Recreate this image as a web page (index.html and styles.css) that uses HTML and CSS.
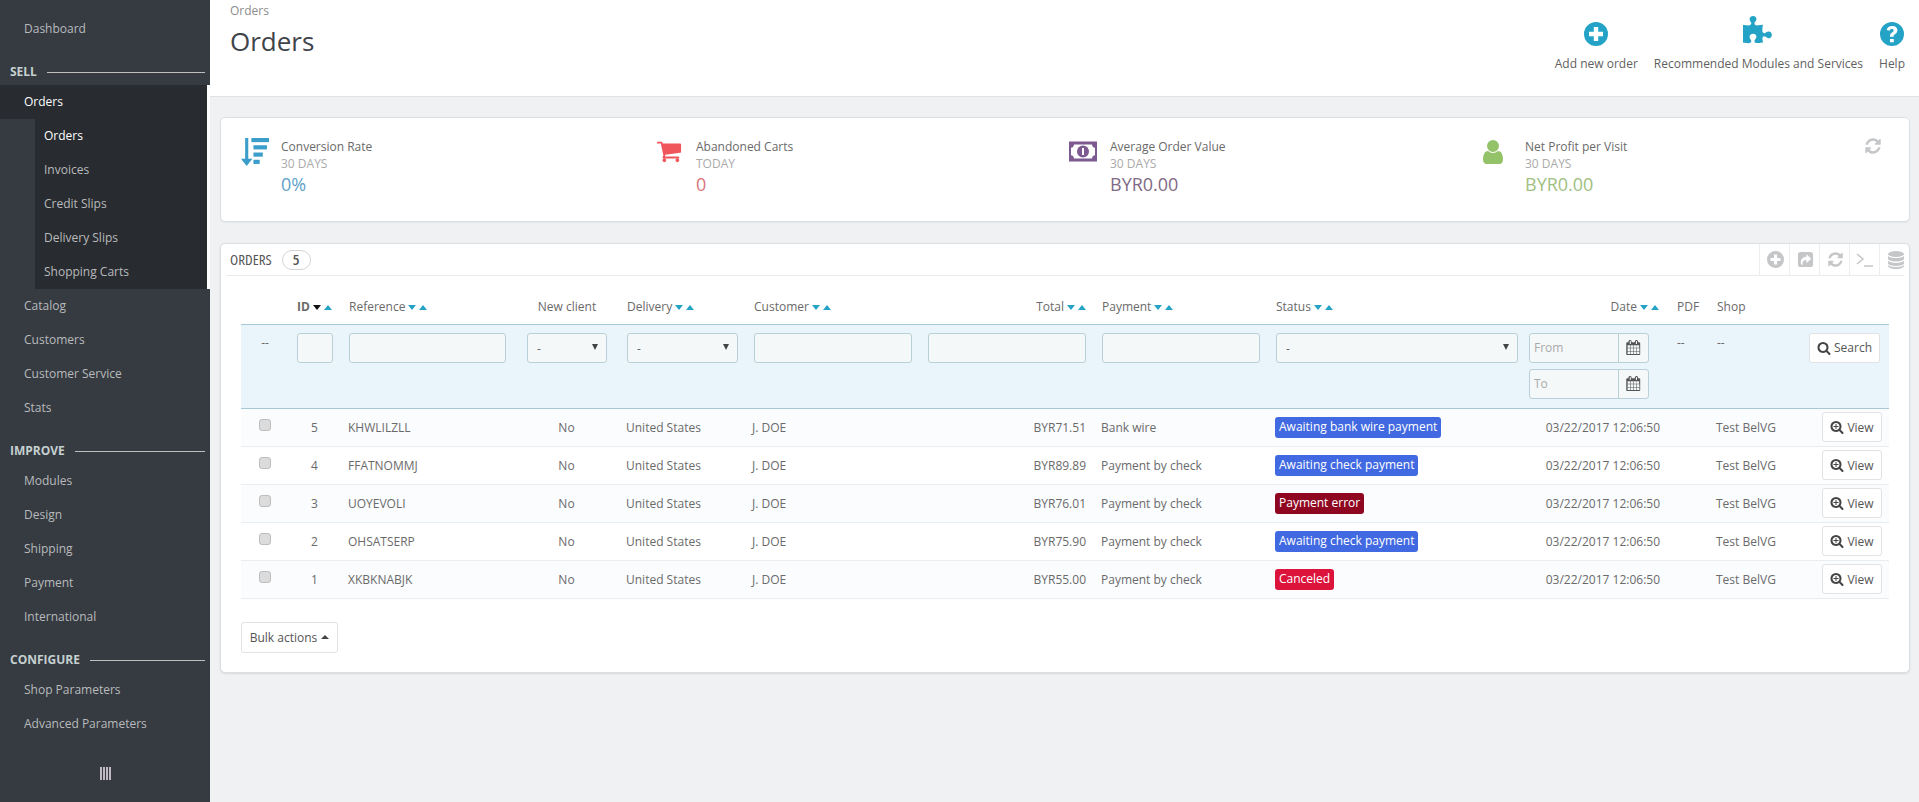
FILE: index.html
```html
<!DOCTYPE html>
<html lang="en">
<head>
<meta charset="utf-8">
<title>Orders</title>
<link rel="stylesheet" href="styles.css">
</head>
<body>
<svg class="defs" aria-hidden="true">
  <symbol id="i-cart" viewBox="0 0 1792 1792"><path d="M704 1536q0 52-38 90t-90 38-90-38-38-90 38-90 90-38 90 38 38 90zm896 0q0 52-38 90t-90 38-90-38-38-90 38-90 90-38 90 38 38 90zm128-1088v512q0 24-16.5 42.5t-40.5 21.5l-1044 122q13 60 13 70 0 16-24 64h920q26 0 45 19t19 45-19 45-45 19h-1024q-26 0-45-19t-19-45q0-11 8-31.5t16-36 21.5-40 15.5-29.5l-177-823h-204q-26 0-45-19t-19-45 19-45 45-19h256q16 0 28.5 6.5t19.5 15.5 13 24.5 8 26 5.5 29.5 4.5 26h1201q26 0 45 19t19 45z"/></symbol>
  <symbol id="i-user" viewBox="0 0 1792 1792"><path d="M1536 1399q0 109-62.5 187t-150.5 78h-854q-88 0-150.5-78t-62.5-187q0-85 8.5-160.5t31.5-152 58.5-131 94-89 134.5-34.5q131 128 313 128t313-128q76 0 134.5 34.5t94 89 58.5 131 31.5 152 8.5 160.5zm-256-887q0 159-112.5 271.5t-271.5 112.5-271.5-112.5-112.5-271.5 112.5-271.5 271.5-112.5 271.5 112.5 112.5 271.5z"/></symbol>
  <symbol id="i-refresh" viewBox="0 0 1792 1792"><path d="M1639 1056q0 5-1 7-64 268-268 434.5t-478 166.5q-146 0-282.5-55t-243.5-157l-129 129q-19 19-45 19t-45-19-19-45v-448q0-26 19-45t45-19h448q26 0 45 19t19 45-19 45l-137 137q71 66 161 102t187 36q134 0 250-65t186-179q11-17 53-117 8-23 30-23h192q13 0 22.5 9.5t9.5 22.5zm25-800v448q0 26-19 45t-45 19h-448q-26 0-45-19t-19-45 19-45l138-138q-148-137-349-137-134 0-250 65t-186 179q-11 17-53 117-8 23-30 23h-199q-13 0-22.5-9.5t-9.5-22.5v-7q65-268 270-434.5t480-166.5q146 0 284 55.5t245 156.5l130-129q19-19 45-19t45 19 19 45z"/></symbol>
  <symbol id="i-puzzle" viewBox="0 0 1792 1792"><path d="M1664 1098q0 81-44.5 135t-123.5 54q-41 0-77.5-17.5t-59-38-56.5-38-71-17.5q-110 0-110 124 0 39 16 115t15 115v5q-22 0-33 1-34 3-97.5 11.5t-115.5 13.5-98 5q-61 0-103-26.5t-42-83.5q0-37 17.5-71t38-56.5 38-59 17.5-77.5q0-79-54-123.5t-135-44.5q-84 0-143 45.5t-59 127.5q0 43 15 83t33.5 64.5 33.5 53 15 50.5q0 45-46 89-37 35-117 35-95 0-245-24-9-2-27.5-4t-27.5-4l-13-2q-1 0-3-1-2 0-2-1v-1024q2 1 17.5 3.5t34 5 21.5 3.5q150 24 245 24 80 0 117-35 46-44 46-89 0-22-15-50.5t-33.5-53-33.5-64.5-15-83q0-82 59-127.5t144-45.5q80 0 134 44.5t54 123.5q0 41-17.5 77.5t-38 59-38 56.5-17.5 71q0 57 42 83.5t103 26.5q64 0 180-15t163-17v2q-1 2-3.5 17.5t-5 34-3.5 21.5q-24 150-24 245 0 80 35 117 44 46 89 46 22 0 50.5-15t53-33.5 64.5-33.5 83-15q82 0 127.5 59t45.5 143z"/></symbol>
  <symbol id="i-search" viewBox="0 0 1792 1792"><path d="M1216 832q0-185-131.5-316.5t-316.5-131.5-316.5 131.5-131.5 316.5 131.5 316.5 316.5 131.5 316.5-131.5 131.5-316.5zm512 832q0 52-38 90t-90 38q-54 0-90-38l-343-342q-179 124-399 124-143 0-273.5-55.5t-225-150-150-225-55.5-273.5 55.5-273.5 150-225 225-150 273.5-55.5 273.5 55.5 225 150 150 225 55.5 273.5q0 220-124 399l343 343q37 37 37 90z"/></symbol>
  <symbol id="i-zoom" viewBox="0 0 1792 1792"><path d="M1216 832q0-185-131.5-316.5t-316.5-131.5-316.5 131.5-131.5 316.5 131.5 316.5 316.5 131.5 316.5-131.5 131.5-316.5zm512 832q0 52-38 90t-90 38q-54 0-90-38l-343-342q-179 124-399 124-143 0-273.5-55.5t-225-150-150-225-55.5-273.5 55.5-273.5 150-225 225-150 273.5-55.5 273.5 55.5 225 150 150 225 55.5 273.5q0 220-124 399l343 343q37 37 37 90z"/><path d="M704 512h128v256h256v128h-256v256h-128v-256h-256v-128h256z"/></symbol>
  <symbol id="i-calendar" viewBox="0 0 1792 1792"><path d="M192 1664h288v-288h-288v288zm352 0h320v-288h-320v288zm-352-352h288v-320h-288v320zm352 0h320v-320h-320v320zm-352-384h288v-288h-288v288zm736 736h320v-288h-320v288zm-384-736h320v-288h-320v288zm768 736h288v-288h-288v288zm-384-352h320v-320h-320v320zm-352-864v-288q0-13-9.500-22.500t-22.500-9.500h-64q-13 0-22.500 9.500t-9.500 22.500v288q0 13 9.500 22.500t22.500 9.500h64q13 0 22.500-9.500t9.500-22.500zm736 864h288v-320h-288v320zm-384-384h320v-288h-320v288zm352 0h288v-288h-288v288zm32-480v-288q0-13-9.500-22.500t-22.500-9.500h-64q-13 0-22.500 9.500t-9.500 22.500v288q0 13 9.500 22.500t22.500 9.500h64q13 0 22.500-9.500t9.500-22.500zm384-64v1280q0 52-38 90t-90 38h-1408q-52 0-90-38t-38-90v-1280q0-52 38-90t90-38h128v-96q0-66 47-113t113-47h64q66 0 113 47t47 113v96h384v-96q0-66 47-113t113-47h64q66 0 113 47t47 113v96h128q52 0 90 38t38 90z"/></symbol>
  <symbol id="i-plus-circle" viewBox="0 0 24 24"><path fill-rule="evenodd" d="M12 0a12 12 0 1 1 0 24a12 12 0 0 1 0-24zM9.800 5v4.800H5v4.400h4.800V19h4.400v-4.800H19V9.800h-4.800V5z"/></symbol>
  <symbol id="i-help" viewBox="0 0 24 24"><path fill-rule="evenodd" d="M12 0a12 12 0 1 1 0 24a12 12 0 0 1 0-24zM10 17v3.200h3.800V17zM12 4c-2.900 0-4.800 1.500-5.300 3.900l2.900.8c.3-1.200 1-1.800 2.200-1.800 1.100 0 1.900.6 1.900 1.500 0 .8-.5 1.200-1.300 1.800-1.500 1-2.400 1.900-2.400 3.600v.9h3.600v-.6c0-.8.400-1.200 1.300-1.800 1.400-.9 2.500-2 2.500-4C17.400 5.500 15 4 12 4z"/></symbol>
  <symbol id="i-share" viewBox="0 0 18 18"><path fill-rule="evenodd" d="M4 1h10a3 3 0 0 1 3 3v10a3 3 0 0 1-3 3H4a3 3 0 0 1-3-3V4a3 3 0 0 1 3-3zM10 3.500v2.700C6.800 6.300 4 8.200 4 12.500c0 .6.100 1.200.3 1.800h2c-.3-.5-.4-1.100-.4-1.600 0-2.300 1.800-3.100 4.100-3.200V13l5-4.800z"/></symbol>
  <symbol id="i-db" viewBox="0 0 16 18"><ellipse cx="8" cy="3" rx="8" ry="3"/><path d="M0 5c1.500 1.500 4.500 2.100 8 2.100s6.500-.6 8-2.100v3c-.5 1.500-4 2.500-8 2.500S.5 9.500 0 8zM0 9.800c1.500 1.500 4.500 2.100 8 2.100s6.500-.6 8-2.100V12.500c-.5 1.500-4 2.500-8 2.500s-7.500-1-8-2.500zM0 14c1.500 1.500 4.500 2 8 2s6.500-.5 8-2v1c-.5 1.800-4 3-8 3s-7.500-1.200-8-3z"/></symbol>
</svg>

<div class="app">
  <nav class="sidebar">
    <a class="nav-item">Dashboard</a>
    <div class="nav-section">SELL</div>
    <div class="nav-group">
      <a class="nav-item nav-active">Orders</a>
      <div class="subnav">
        <a class="subnav-item subnav-active">Orders</a>
        <a class="subnav-item">Invoices</a>
        <a class="subnav-item">Credit Slips</a>
        <a class="subnav-item">Delivery Slips</a>
        <a class="subnav-item">Shopping Carts</a>
      </div>
    </div>
    <a class="nav-item">Catalog</a>
    <a class="nav-item">Customers</a>
    <a class="nav-item">Customer Service</a>
    <a class="nav-item">Stats</a>
    <div class="nav-section">IMPROVE</div>
    <a class="nav-item">Modules</a>
    <a class="nav-item">Design</a>
    <a class="nav-item">Shipping</a>
    <a class="nav-item">Payment</a>
    <a class="nav-item">International</a>
    <div class="nav-section">CONFIGURE</div>
    <a class="nav-item">Shop Parameters</a>
    <a class="nav-item">Advanced Parameters</a>
    <div class="nav-toggle"><i></i><i></i><i></i><i></i></div>
  </nav>

  <div class="main">
    <header class="page-head">
      <div class="head-titles">
        <div class="crumb">Orders</div>
        <h1 class="title">Orders</h1>
      </div>
      <div class="head-tools">
        <a class="tool"><svg class="tool-icon"><use href="#i-plus-circle"/></svg><span>Add new order</span></a>
        <a class="tool"><svg class="tool-icon tool-puzzle"><use href="#i-puzzle"/></svg><span>Recommended Modules and Services</span></a>
        <a class="tool"><svg class="tool-icon"><use href="#i-help"/></svg><span>Help</span></a>
      </div>
    </header>

    <div class="content">
      <section class="kpis">
        <div class="kpi">
          <svg class="kpi-icon kpi-blue" viewBox="0 0 27 27"><path d="M4 0h3v20h4l-5.500 7L0 20h4z"/><rect x="10" y="0" width="17" height="4"/><rect x="12" y="7" width="13" height="4"/><rect x="12" y="14" width="9" height="4"/><rect x="12" y="21" width="6" height="4"/></svg>
          <div class="kpi-text"><div class="kpi-label">Conversion Rate</div><div class="kpi-sub">30 DAYS</div><div class="kpi-value v-blue">0%</div></div>
        </div>
        <div class="kpi">
          <svg class="kpi-icon kpi-red kpi-cart"><use href="#i-cart"/></svg>
          <div class="kpi-text"><div class="kpi-label">Abandoned Carts</div><div class="kpi-sub">TODAY</div><div class="kpi-value v-red">0</div></div>
        </div>
        <div class="kpi">
          <svg class="kpi-icon kpi-purple" viewBox="0 0 28 27"><path fill-rule="evenodd" d="M0 3h28v20H0zM5 6c0 1.900-1.300 3.200-3 3.200v7.600c1.700 0 3 1.300 3 3.200h18c0-1.900 1.300-3.200 3-3.200V9.200c-1.700 0-3-1.300-3-3.200z"/><circle cx="14" cy="13" r="6"/><rect class="kpi-notch" x="13" y="9.500" width="2" height="7"/></svg>
          <div class="kpi-text"><div class="kpi-label">Average Order Value</div><div class="kpi-sub">30 DAYS</div><div class="kpi-value v-purple">BYR0.00</div></div>
        </div>
        <div class="kpi">
          <svg class="kpi-icon kpi-green"><use href="#i-user"/></svg>
          <div class="kpi-text"><div class="kpi-label">Net Profit per Visit</div><div class="kpi-sub">30 DAYS</div><div class="kpi-value v-green">BYR0.00</div></div>
        </div>
        <svg class="kpi-refresh"><use href="#i-refresh"/></svg>
      </section>

      <section class="panel">
        <div class="panel-head">
          <span class="panel-title">ORDERS</span>
          <span class="panel-badge">5</span>
          <div class="panel-tools">
            <span class="ptool"><svg class="ptool-icon"><use href="#i-plus-circle"/></svg></span>
            <span class="ptool"><svg class="ptool-icon"><use href="#i-share"/></svg></span>
            <span class="ptool"><svg class="ptool-icon"><use href="#i-refresh"/></svg></span>
            <span class="ptool"><svg class="ptool-term" viewBox="0 0 18 14"><path d="M1 1l6 5-6 5M8 13h9"/></svg></span>
            <span class="ptool"><svg class="ptool-icon ptool-db"><use href="#i-db"/></svg></span>
          </div>
        </div>

        <table class="orders">
          <colgroup>
            <col class="c-check"><col class="c-id"><col class="c-ref"><col class="c-new"><col class="c-del"><col class="c-cust"><col class="c-total"><col class="c-pay"><col class="c-status"><col class="c-date"><col class="c-pdf"><col class="c-shop"><col class="c-act">
          </colgroup>
          <thead>
            <tr class="head-row">
              <th></th>
              <th class="th-strong">ID<span class="sort"><i class="down down-dark"></i><i class="up"></i></span></th>
              <th>Reference<span class="sort"><i class="down"></i><i class="up"></i></span></th>
              <th class="t-center">New client</th>
              <th>Delivery<span class="sort"><i class="down"></i><i class="up"></i></span></th>
              <th>Customer<span class="sort"><i class="down"></i><i class="up"></i></span></th>
              <th class="t-right">Total<span class="sort"><i class="down"></i><i class="up"></i></span></th>
              <th>Payment<span class="sort"><i class="down"></i><i class="up"></i></span></th>
              <th>Status<span class="sort"><i class="down"></i><i class="up"></i></span></th>
              <th class="t-right t-date">Date<span class="sort"><i class="down"></i><i class="up"></i></span></th>
              <th>PDF</th>
              <th>Shop</th>
              <th></th>
            </tr>
            <tr class="filter-row">
              <th class="t-dash-center">--</th>
              <th><input class="field" type="text"></th>
              <th><input class="field f-157" type="text"></th>
              <th class="f-new"><div class="select"><span>-</span><i></i></div></th>
              <th><div class="select"><span>-</span><i></i></div></th>
              <th><input class="field" type="text"></th>
              <th><input class="field" type="text"></th>
              <th><input class="field" type="text"></th>
              <th class="f-status"><div class="select"><span>-</span><i></i></div></th>
              <th>
                <div class="date-group"><input class="date-input" type="text" placeholder="From"><span class="date-btn"><svg class="cal"><use href="#i-calendar"/></svg></span></div>
                <div class="date-group date-second"><input class="date-input" type="text" placeholder="To"><span class="date-btn"><svg class="cal"><use href="#i-calendar"/></svg></span></div>
              </th>
              <th class="t-dash">--</th>
              <th class="t-dash">--</th>
              <th class="t-right f-search"><button class="btn btn-search"><svg class="btn-icon"><use href="#i-search"/></svg>Search</button></th>
            </tr>
          </thead>
          <tbody>
            <tr>
              <td class="t-check"><input class="check" type="checkbox"></td><td class="t-center">5</td><td>KHWLILZLL</td><td class="t-center t-no">No</td><td>United States</td><td class="t-cust">J. DOE</td><td class="t-right">BYR71.51</td><td>Bank wire</td><td><span class="badge b-blue">Awaiting bank wire payment</span></td><td class="t-right t-stamp">03/22/2017 12:06:50</td><td></td><td>Test BelVG</td><td class="t-right t-act"><button class="btn btn-view"><svg class="btn-icon"><use href="#i-zoom"/></svg>View</button></td>
            </tr>
            <tr>
              <td class="t-check"><input class="check" type="checkbox"></td><td class="t-center">4</td><td>FFATNOMMJ</td><td class="t-center t-no">No</td><td>United States</td><td class="t-cust">J. DOE</td><td class="t-right">BYR89.89</td><td>Payment by check</td><td><span class="badge b-blue">Awaiting check payment</span></td><td class="t-right t-stamp">03/22/2017 12:06:50</td><td></td><td>Test BelVG</td><td class="t-right t-act"><button class="btn btn-view"><svg class="btn-icon"><use href="#i-zoom"/></svg>View</button></td>
            </tr>
            <tr>
              <td class="t-check"><input class="check" type="checkbox"></td><td class="t-center">3</td><td>UOYEVOLI</td><td class="t-center t-no">No</td><td>United States</td><td class="t-cust">J. DOE</td><td class="t-right">BYR76.01</td><td>Payment by check</td><td><span class="badge b-dark">Payment error</span></td><td class="t-right t-stamp">03/22/2017 12:06:50</td><td></td><td>Test BelVG</td><td class="t-right t-act"><button class="btn btn-view"><svg class="btn-icon"><use href="#i-zoom"/></svg>View</button></td>
            </tr>
            <tr>
              <td class="t-check"><input class="check" type="checkbox"></td><td class="t-center">2</td><td>OHSATSERP</td><td class="t-center t-no">No</td><td>United States</td><td class="t-cust">J. DOE</td><td class="t-right">BYR75.90</td><td>Payment by check</td><td><span class="badge b-blue">Awaiting check payment</span></td><td class="t-right t-stamp">03/22/2017 12:06:50</td><td></td><td>Test BelVG</td><td class="t-right t-act"><button class="btn btn-view"><svg class="btn-icon"><use href="#i-zoom"/></svg>View</button></td>
            </tr>
            <tr>
              <td class="t-check"><input class="check" type="checkbox"></td><td class="t-center">1</td><td>XKBKNABJK</td><td class="t-center t-no">No</td><td>United States</td><td class="t-cust">J. DOE</td><td class="t-right">BYR55.00</td><td>Payment by check</td><td><span class="badge b-red">Canceled</span></td><td class="t-right t-stamp">03/22/2017 12:06:50</td><td></td><td>Test BelVG</td><td class="t-right t-act"><button class="btn btn-view"><svg class="btn-icon"><use href="#i-zoom"/></svg>View</button></td>
            </tr>
          </tbody>
        </table>

        <button class="btn btn-bulk">Bulk actions<i class="caret"></i></button>
      </section>
    </div>
  </div>
</div>
</body>
</html>
```

FILE: styles.css
```css
* { box-sizing: border-box; }
html, body { margin: 0; height: 100%; }
body { font-family: "Open Sans", "Liberation Sans", sans-serif; font-size: 12px; color: #666; background: #eff1f2; overflow: hidden; }
.defs { display: none; }
a { display: block; }

.app { display: flex; height: 802px; }

/* sidebar */
.sidebar { width: 210px; flex: none; background: #363a41; padding-top: 12px; color: #b8babc; }
.nav-item { height: 34px; line-height: 34px; padding-left: 24px; }
.nav-section { height: 39px; padding: 16px 5px 3px 10px; display: flex; align-items: center; gap: 10px; font-weight: 700; line-height: 20px; color: #c5d0d0; }
.nav-section::after { content: ""; flex: 1; height: 1px; background: #bebebe; }
.nav-group { border-right: 3px solid #fff; }
.nav-active { background: #282b30; color: #fff; }
.subnav { margin-left: 35px; background: #282b30; }
.subnav-item { height: 34px; line-height: 34px; padding-left: 9px; }
.subnav-active { color: #fff; }
.nav-toggle { display: flex; gap: 1px; width: 11px; height: 13px; margin: 26px 0 0 100px; }
.nav-toggle i { flex: 1; background: #c0b8c4; }

/* page head */
.main { flex: 1; min-width: 0; display: flex; flex-direction: column; }
.page-head { height: 97px; flex: none; background: #fff; border-bottom: 1px solid #dfe2e4; display: flex; justify-content: space-between; padding: 0 14px 0 20px; }
.crumb { line-height: 16px; padding-top: 3px; color: #8c8c8c; }
.title { margin: 4px 0 0; font-size: 26px; font-weight: 400; line-height: 36px; color: #3f434a; }
.head-tools { display: flex; gap: 16px; padding-top: 22px; }
.tool { display: flex; flex-direction: column; align-items: center; color: #5f5f5f; font-size: 12px; }
.tool span { margin-top: 9px; line-height: 18px; }
.tool-icon { width: 24px; height: 24px; fill: #25a3c7; }
.tool-puzzle { width: 31px; height: 31px; margin-top: -6px; margin-bottom: -1px; }

/* content */
.content { padding: 20px 9px 0 10px; }
.kpis { height: 105px; background: #fff; border: 1px solid #dcdfe1; border-radius: 5px; box-shadow: 0 1px 1px rgba(0,0,0,.05); padding: 19px 27px 0 20px; display: grid; grid-template-columns: 415px 414px 415px 1fr auto; margin-bottom: 21px; }
.kpi { display: flex; }
.kpi-text { padding-top: 1px; }
.kpi-icon { width: 28px; height: 28px; flex: none; margin-right: 12px; margin-top: 1px; }
.kpi-blue { fill: #3a9dca; }
.kpi-red { fill: #f0555b; }
.kpi-cart { width: 26px; height: 26px; margin-right: 14px; }
.kpi-purple { fill: #7d5a92; margin-left: -1px; margin-right: 13px; }
.kpi-notch { fill: #fff; }
.kpi-green { fill: #94c269; margin-left: -6px; margin-right: 18px; }
.kpi-label { line-height: 18px; color: #6a6a6a; }
.kpi-sub { line-height: 16px; color: #aaa; }
.kpi-value { font-size: 18px; line-height: 26px; margin-top: -1px; }
.v-blue { color: #619fc9; }
.v-red { color: #d8757d; }
.v-purple { color: #7f6a85; }
.v-green { color: #9fc080; }
.kpi-refresh { width: 18px; height: 18px; fill: #c4c6c8; margin-top: 0; }

/* panel */
.panel { height: 430px; background: #fff; border: 1px solid #dcdfe1; border-radius: 5px; box-shadow: 0 1px 2px rgba(0,0,0,.1); padding: 0 20px; }
.panel-head { display: flex; align-items: center; height: 32px; margin: 0 -15px; padding-left: 4px; border-bottom: 1px solid #e9ecef; }
.panel-title { font-stretch: 75%; font-size: 15px; line-height: 28px; padding-bottom: 2px; color: #555; }
.panel-badge { width: 29px; height: 20px; margin-left: 10px; border: 1px solid #d5d5d5; border-radius: 10px; text-align: center; font-stretch: 75%; font-weight: 600; font-size: 15px; line-height: 17px; color: #555; }
.panel-tools { margin-left: auto; display: flex; height: 100%; }
.ptool { width: 30px; border-left: 1px solid #eceef0; display: flex; align-items: center; justify-content: center; padding-left: 1px; }
.ptool:last-child { width: 25px; padding-left: 7px; }
.ptool-icon { width: 17px; height: 17px; flex: none; fill: #c4c6c8; }
.ptool-db { width: 16px; height: 18px; }
.ptool-term { width: 18px; height: 14px; fill: none; stroke: #c4c6c8; stroke-width: 1.500; }

/* table */
.orders { width: 1648px; table-layout: fixed; border-collapse: collapse; margin-top: 12px; }
.c-check { width: 48px; } .c-id { width: 52px; } .c-ref { width: 178px; } .c-new { width: 100px; } .c-del { width: 127px; } .c-cust { width: 174px; } .c-total { width: 174px; } .c-pay { width: 174px; } .c-status { width: 253px; } .c-date { width: 148px; } .c-pdf { width: 40px; } .c-shop { width: 92px; } .c-act { width: 88px; }
.orders th, .orders td { padding: 0 8px; font-weight: 400; text-align: left; white-space: nowrap; color: #6a6a6a; }
.head-row { height: 36px; }
.head-row th { padding-top: 2px; }
.orders .th-strong { font-weight: 700; }
.filter-row { height: 84px; background: #eaf4fb; border-top: 1px solid #a7c9d6; border-bottom: 1px solid #a7c9d6; }
.filter-row th { vertical-align: top; padding-top: 8px; }
.sort { display: inline-flex; align-items: center; gap: 3px; margin-left: 3px; vertical-align: 1px; }
.sort i { display: block; width: 0; height: 0; border-left: 4px solid transparent; border-right: 4px solid transparent; }
.down { border-top: 5px solid #25a3c7; }
.down-dark { border-top-color: #111; }
.up { border-bottom: 5px solid #25a3c7; }
.orders .t-center { text-align: center; }
.orders .t-right { text-align: right; }
.orders th.t-date { padding-right: 10px; }
.orders th.t-center, .orders td.t-no { padding-right: 12px; }
.orders th.t-dash-center { text-align: center; padding-top: 9px; line-height: 18px; }
.orders th.t-dash { padding-top: 9px; line-height: 18px; }
.field { display: block; width: 100%; height: 30px; background: #f5f8f9; border: 1px solid #b9d0d8; border-radius: 3px; padding: 0 8px; font: inherit; }
.f-157 { width: 157px; }
.select { display: flex; align-items: center; justify-content: space-between; height: 30px; background: #f5f8f9; border: 1px solid #b9d0d8; border-radius: 3px; padding: 2px 8px 0 9px; color: #666; }
.select i { display: block; width: 0; height: 0; margin-top: -4px; border-left: 3.500px solid transparent; border-right: 3.500px solid transparent; border-top: 6px solid #444; }
.orders th.f-new { padding-right: 12px; }
.orders th.f-status { padding-right: 3px; }
.date-group { display: flex; width: 120px; height: 30px; background: #f5f8f9; border: 1px solid #b9d0d8; border-radius: 3px; }
.date-second { margin-top: 6px; }
.date-input { width: 89px; min-width: 0; height: 100%; border: 0; border-right: 1px solid #b9d0d8; background: transparent; padding: 0 4px; font: inherit; }
.date-input::placeholder { color: #aaa; opacity: 1; }
.date-btn { flex: 1; display: flex; align-items: center; justify-content: center; }
.cal { width: 15px; height: 15px; fill: #555; }
.orders tbody tr { height: 38px; border-bottom: 1px solid #eaedef; }
.orders tbody tr:nth-child(odd) { background: #fafcfe; }
.orders td { padding-left: 7px; }
.orders td.t-check { padding: 0 0 4px 18px; }
.orders td.t-cust { padding-left: 6px; }
.orders td.t-stamp { padding-right: 9px; }
.orders td.t-act { padding-right: 7px; }
.check { display: block; appearance: none; width: 12px; height: 12px; margin: 0; background: #dcdcdc; border: 1px solid #bdbdbd; border-radius: 3px; }
.badge { display: inline-block; height: 21px; line-height: 20px; padding: 0 4px; border-radius: 3px; color: #fff; }
.b-blue { background: #4169e1; }
.b-dark { background: #8f0621; }
.b-red { background: #dc143c; }

/* buttons */
.btn { display: inline-flex; align-items: center; justify-content: center; height: 30px; background: #fff; border: 1px solid #e2e2e2; border-radius: 3px; font: inherit; color: #555; padding: 0; }
.btn-search { width: 71px; }
.orders th.f-search { padding-right: 9px; }
.btn-view { width: 60px; vertical-align: middle; }
.btn-icon { width: 14px; height: 14px; fill: #444; margin-right: 3px; }
.btn-bulk { display: flex; width: 97px; height: 31px; margin-top: 23px; }
.caret { width: 0; height: 0; margin-left: 4px; border-left: 4px solid transparent; border-right: 4px solid transparent; border-bottom: 4px solid #444; }
```
